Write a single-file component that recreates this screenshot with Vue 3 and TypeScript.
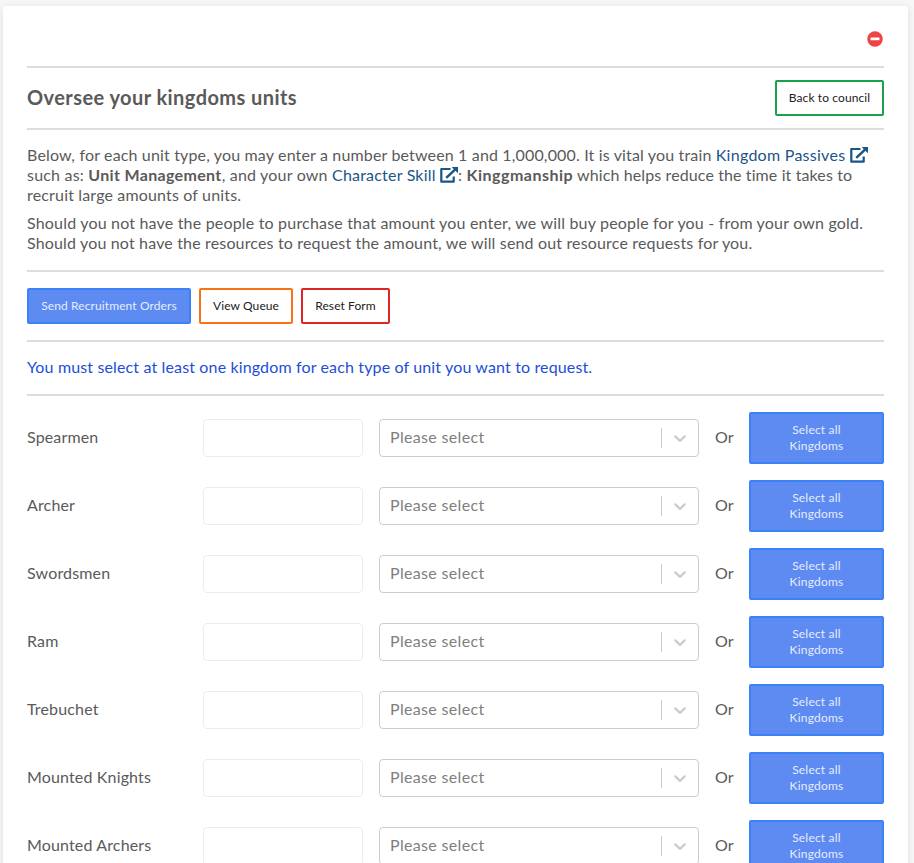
<script setup lang="ts">
const units: string[] = [
  'Spearmen',
  'Archer',
  'Swordsmen',
  'Ram',
  'Trebuchet',
  'Mounted Knights',
  'Mounted Archers',
]
</script>

<template>
  <main class="card">
    <div class="close-row">
      <button class="close" type="button" aria-label="Close">
        <svg viewBox="0 0 16 16" width="16" height="16">
          <circle cx="8" cy="8" r="7.75" fill="#ef4444" />
          <rect x="3.5" y="6.6" width="9" height="2.7" rx="0.5" fill="#fff" />
        </svg>
      </button>
    </div>
    <hr />
    <header class="head">
      <h3>Oversee your kingdoms units</h3>
      <button class="btn green" type="button">Back to council</button>
    </header>
    <hr />
    <section class="intro">
      <p>
        <span class="line l1">Below, for each unit type, you may enter a number between 1 and 1,000,000. It is vital you train <a class="passives">Kingdom Passives <svg class="ext" viewBox="0 0 18 16"><path d="M10.5 2H1.3v12.7h12.4V9.5" fill="none" stroke="currentColor" stroke-width="2.2" stroke-linejoin="round" /><path d="M6.2 10.8 15 2.6" stroke="currentColor" stroke-width="2.5" /><path d="M11.6 0H18v6.2z" fill="currentColor" /></svg></a></span>
        <span class="line l2">such as: <strong>Unit Management</strong>, and your own <a>Character Skill <svg class="ext" viewBox="0 0 18 16"><path d="M10.5 2H1.3v12.7h12.4V9.5" fill="none" stroke="currentColor" stroke-width="2.2" stroke-linejoin="round" /><path d="M6.2 10.8 15 2.6" stroke="currentColor" stroke-width="2.5" /><path d="M11.6 0H18v6.2z" fill="currentColor" /></svg></a>: <strong class="skill">Kinggmanship</strong><span class="tail"> which helps reduce the time it takes to</span></span>
        <span class="line l3">recruit large amounts of units.</span>
      </p>
      <p>
        <span class="line l4">Should you not have the people to purchase that amount you enter, we will buy people for you - from your own gold.</span>
        <span class="line l5">Should you not have the resources to request the amount, we will send out resource requests for you.</span>
      </p>
    </section>
    <hr />
    <div class="actions">
      <button class="btn blue send" type="button">Send Recruitment Orders</button>
      <button class="btn orange" type="button">View Queue</button>
      <button class="btn red" type="button">Reset Form</button>
    </div>
    <hr />
    <p class="notice">You must select at least one kingdom for each type of unit you want to request.</p>
    <hr />
    <div class="rows">
      <div v-for="unit in units" :key="unit" class="row">
        <label>{{ unit }}</label>
        <input type="text" />
        <div class="select">
          <span class="placeholder">Please select</span>
          <span class="divider"></span>
          <span class="chevron">
            <svg viewBox="0 0 20 20" width="20" height="20" fill="#ccc">
              <path d="M4.516 7.548c0.436-0.446 1.043-0.481 1.576 0l3.908 3.747 3.908-3.747c0.533-0.481 1.141-0.446 1.574 0 0.436 0.445 0.408 1.197 0 1.615-0.406 0.418-4.695 4.502-4.695 4.502-0.217 0.223-0.502 0.335-0.787 0.335s-0.57-0.112-0.789-0.335c0 0-4.287-4.084-4.695-4.502s-0.436-1.17 0-1.615z" />
            </svg>
          </span>
        </div>
        <span class="or">Or</span>
        <button class="btn blue all" type="button">Select all<br />Kingdoms</button>
      </div>
    </div>
  </main>
</template>

<style>
body {
  background: #f7f7f7;
}
#app {
  height: 863px;
  overflow: hidden;
}
</style>

<style scoped>
.card {
  box-sizing: border-box;
  margin: 6px 6px 0 3px;
  padding: 24px;
  min-height: 900px;
  border-radius: 3px;
  background: #fff;
  box-shadow: 0 1px 8px rgba(0, 0, 0, 0.1);
  color: #5a5a5a;
  font: 16px/20px Lato, "Liberation Sans", sans-serif;
}
.close-row {
  display: flex;
  justify-content: flex-end;
  height: 36px;
}
.close {
  display: block;
  width: 17px;
  height: 18px;
  padding: 0 1px 0 0;
  border: 0;
  background: none;
}
.close svg {
  display: block;
}
hr {
  height: 2px;
  margin: 0;
  border: 0;
  background: #ddd;
}
.head {
  display: flex;
  align-items: center;
  justify-content: space-between;
  height: 60px;
}
h3 {
  margin: 0;
  padding-bottom: 2px;
  font-size: 20px;
  line-height: 24px;
  font-weight: 700;
  letter-spacing: 0.43px;
}
.btn {
  box-sizing: border-box;
  height: 36px;
  padding: 0;
  border: 2px solid;
  border-radius: 2px;
  background: #fff;
  color: #222;
  font: 12px/16px Lato, "Liberation Sans", sans-serif;
  letter-spacing: 0.1px;
  white-space: nowrap;
}
.green {
  width: 109px;
  border-color: #16a34a;
}
.orange {
  width: 94px;
  border-color: #f97316;
}
.red {
  width: 89px;
  border-color: #dc2626;
}
.blue {
  border-color: #3b82f6;
  background: #5d8bf1;
  color: #e5edff;
}
.send {
  width: 164px;
}
.intro {
  height: 140px;
  box-sizing: border-box;
  padding-top: 15px;
}
.intro p {
  margin: 0 0 8px;
}
.line {
  display: block;
  height: 20px;
  white-space: nowrap;
}
.l1 {
  letter-spacing: 0.155px;
}
.passives {
  letter-spacing: 0.27px;
}
.l2 {
  letter-spacing: 0.2px;
}
.l3,
.l5 {
  letter-spacing: 0.16px;
}
.l4 {
  letter-spacing: 0.185px;
}
a {
  color: #1b5587;
}
strong {
  font-weight: 700;
  letter-spacing: 0.33px;
}
.skill {
  letter-spacing: 0.5px;
}
.tail {
  letter-spacing: 0.11px;
}
.ext {
  width: 18px;
  height: 16px;
  vertical-align: -2px;
}
.actions {
  display: flex;
  gap: 8px;
  padding: 16px 0;
}
.notice {
  margin: 0;
  padding: 15px 0 17px;
  color: #1d4ed8;
  letter-spacing: 0.14px;
  white-space: nowrap;
}
.rows {
  display: grid;
  gap: 16px;
  padding-top: 16px;
}
.row {
  display: grid;
  grid-template-columns: 160px 160px 320px 18px 135px;
  gap: 16px;
  align-items: center;
  height: 52px;
}
label,
.or {
  padding-bottom: 2px;
}
label {
  letter-spacing: 0.15px;
}
input,
.select {
  box-sizing: border-box;
  width: 100%;
  height: 38px;
  border: 1px solid #ededed;
  border-radius: 4px;
  background: #fff;
}
.select {
  display: flex;
  align-items: center;
  border-color: #ccc;
}
.placeholder {
  flex: 1;
  padding: 0 0 2px 10px;
  color: #808080;
  letter-spacing: 0.33px;
}
.divider {
  width: 1px;
  height: 20px;
  background: #ccc;
}
.chevron {
  padding: 8px;
}
.chevron svg {
  display: block;
}
.all {
  height: 52px;
  letter-spacing: 0.2px;
}
</style>
